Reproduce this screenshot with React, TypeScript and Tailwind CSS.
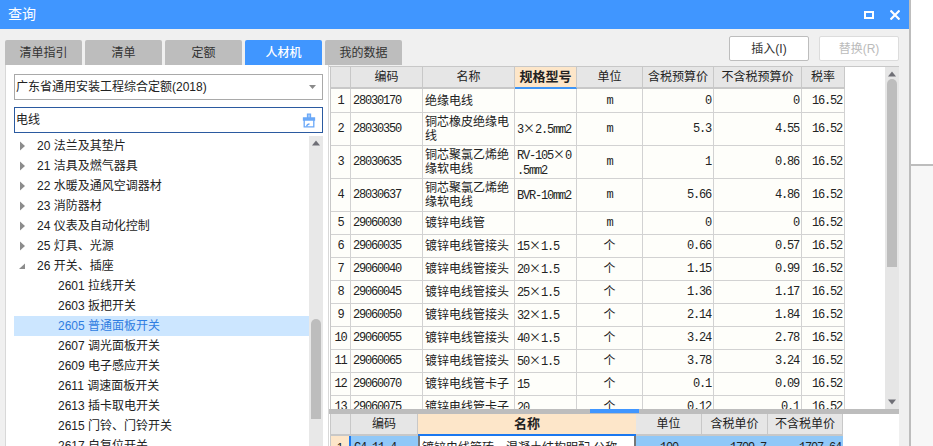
const cjk = '"Noto Sans CJK SC", sans-serif';

const tabs = ['清单指引', '清单', '定额', '人材机', '我的数据'];

const tree = [
  '20 法兰及其垫片',
  '21 洁具及燃气器具',
  '22 水暖及通风空调器材',
  '23 消防器材',
  '24 仪表及自动化控制',
  '25 灯具、光源',
];

const switches = [
  '2601 拉线开关',
  '2603 扳把开关',
  '2605 普通面板开关',
  '2607 调光面板开关',
  '2609 电子感应开关',
  '2611 调速面板开关',
  '2613 插卡取电开关',
  '2615 门铃、门铃开关',
  '2617 自复位开关',
];

const rows = [
  { code: '28030170', name: '绝缘电线', spec: '', unit: 'm', tax: '0', net: '0', h: 'h-[24px]' },
  { code: '28030350', name: '铜芯橡皮绝缘电线', spec: '3×2.5mm2', unit: 'm', tax: '5.3', net: '4.55', h: 'h-[33px]' },
  { code: '28030635', name: '铜芯聚氯乙烯绝缘软电线', spec: 'RV-105×0\n.5mm2', unit: 'm', tax: '1', net: '0.86', h: 'h-[33px]' },
  { code: '28030637', name: '铜芯聚氯乙烯绝缘软电线', spec: 'BVR-10mm2', unit: 'm', tax: '5.66', net: '4.86', h: 'h-[33px]' },
  { code: '29060030', name: '镀锌电线管', spec: '', unit: 'm', tax: '0', net: '0', h: 'h-[23px]' },
  { code: '29060035', name: '镀锌电线管接头', spec: '15×1.5', unit: '个', tax: '0.66', net: '0.57', h: 'h-[23px]' },
  { code: '29060040', name: '镀锌电线管接头', spec: '20×1.5', unit: '个', tax: '1.15', net: '0.99', h: 'h-[23px]' },
  { code: '29060045', name: '镀锌电线管接头', spec: '25×1.5', unit: '个', tax: '1.36', net: '1.17', h: 'h-[23px]' },
  { code: '29060050', name: '镀锌电线管接头', spec: '32×1.5', unit: '个', tax: '2.14', net: '1.84', h: 'h-[23px]' },
  { code: '29060055', name: '镀锌电线管接头', spec: '40×1.5', unit: '个', tax: '3.24', net: '2.78', h: 'h-[23px]' },
  { code: '29060065', name: '镀锌电线管接头', spec: '50×1.5', unit: '个', tax: '3.78', net: '3.24', h: 'h-[23px]' },
  { code: '29060070', name: '镀锌电线管卡子', spec: '15', unit: '个', tax: '0.1', net: '0.09', h: 'h-[23px]' },
  { code: '29060075', name: '镀锌电线管卡子', spec: '20', unit: '个', tax: '0.12', net: '0.1', h: 'h-[23px]' },
];

const topCols = 'grid grid-cols-[20px_72px_92px_62px_66px_71px_88px_43px] w-[514px]';
const bottomCols = 'grid grid-cols-[20px_67px_218px_66px_66px_75px] w-[512px]';

// 数字用等宽字体，压到宋体那样 6px 一个字符
function Mono({ text }: { text: string }) {
  return (
    <span className="font-['Liberation_Mono'] tracking-[-1.2px]">
      {text.split(/(×)/).map((part, i) =>
        part === '×' ? (
          <span key={i} className="font-['Noto_Sans_CJK_SC'] tracking-normal">×</span>
        ) : (
          part
        ),
      )}
    </span>
  );
}

function Head({ text, hot }: { text: string; hot?: boolean }) {
  return (
    <div
      className={
        'flex items-center justify-center border-r border-b-2 border-[#c8c8c8] ' +
        (hot ? 'bg-[#fde6c9] text-[13px] font-bold border-b-[#3f95f5]' : 'bg-[#e6e6e6]')
      }
    >
      {text}
    </div>
  );
}

function Cell({ children, className }: { children?: React.ReactNode; className?: string }) {
  return (
    <div className={'flex items-center border-r border-b border-[#d2d2d2] bg-[#fefefa] ' + (className ?? '')}>
      {children}
    </div>
  );
}

function Arrow({ down }: { down?: boolean }) {
  return (
    <svg width="10" height="6" viewBox="0 0 10 6" className={down ? 'rotate-180' : ''}>
      <path d="M5 0.5 9 5.5H1Z" fill="#6f6f76" />
    </svg>
  );
}

function BrushIcon() {
  return (
    <svg width="14" height="15" viewBox="0 0 14 15" fill="none" stroke="#6aa8f8" strokeWidth="1.3">
      <path d="M5.5 5V1.2h3V5" fill="#a9cdfb" />
      <path d="M1.5 5h11v2h-11z" fill="#6aa8f8" />
      <path d="M2.2 7v6.8h9.6V7" />
      <path d="M4.5 13.5c.4-1.5 1.6-2.5 3-2.5" />
    </svg>
  );
}

function TreeArrow({ open }: { open?: boolean }) {
  if (open) {
    return (
      <svg width="8" height="8" viewBox="0 0 8 8">
        <path d="M7 1.5V7H1Z" fill="#8c8c8c" />
      </svg>
    );
  }
  return (
    <svg width="8" height="10" viewBox="0 0 8 10">
      <path d="M2 .5 7 5 2 9.5Z" fill="#8c8c8c" />
    </svg>
  );
}

export default function App() {
  return (
    <div
      className="flex h-[446px] w-[933px] overflow-hidden bg-white text-[12px] text-[#222]"
      style={{ fontFamily: '"Liberation Sans", ' + cjk }}
    >
      <div className="flex h-full w-[911px] shrink-0 flex-col border-r-2 border-[#bdbdbd] bg-[#f0f0f0]">
        {/* 标题栏 */}
        <div className="flex h-[29px] shrink-0 items-center justify-between bg-[#4096ff] pl-[8px] pr-[9px] text-[14px] text-white">
          <span>查询</span>
          <div className="flex items-center gap-[16px]">
            <div className="h-[8px] w-[10px] border-2 border-white" />
            <svg width="10" height="10" viewBox="0 0 10 10" stroke="white" strokeWidth="2.2">
              <path d="M.5.5l9 9M9.5.5l-9 9" />
            </svg>
          </div>
        </div>

        {/* 页签和按钮 */}
        <div className="flex h-[36px] shrink-0 justify-between pl-[5px] pr-[10px]">
          <div className="flex items-stretch gap-[3px] pt-[11px]">
            {tabs.map((t) => (
              <div
                key={t}
                className={
                  'flex w-[77px] items-center justify-center rounded-t-[2px] ' +
                  (t === '人材机' ? 'bg-[#4096ff] font-medium text-white' : 'bg-[#bdbdbd] text-[#333]')
                }
              >
                {t}
              </div>
            ))}
          </div>
          <div className="flex items-start gap-[10px] pt-[7px]">
            <div className="flex h-[25px] w-[80px] items-center justify-center rounded-[2px] border border-[#bdbdbd] bg-white text-[#333]">
              插入(I)
            </div>
            <div className="flex h-[25px] w-[80px] items-center justify-center rounded-[2px] border border-[#dcdcdc] bg-white text-[#bbb]">
              替换(R)
            </div>
          </div>
        </div>

        <div className="flex min-h-0 flex-1 pl-[5px] pr-[10px]">
          {/* 左侧 */}
          <div className="flex min-h-0 w-[324px] shrink-0 flex-col overflow-hidden border-x border-[#d8d8d8] bg-white pl-[8px] pr-[5px] pt-[9px]">
            <div className="flex h-[26px] shrink-0 items-center justify-between border border-[#a9a9a9] pl-[1px] pr-[6px]">
              <span>广东省通用安装工程综合定额(2018)</span>
              <svg width="7" height="4" viewBox="0 0 7 4">
                <path d="M0 0h7L3.5 4Z" fill="#8a8a8a" />
              </svg>
            </div>
            <div className="mt-[7px] flex h-[26px] shrink-0 items-center justify-between border border-[#2b5aa0] pl-[1px] pr-[6px]">
              <span>电线</span>
              <BrushIcon />
            </div>
            <div className="mt-[3px] flex min-h-0 flex-1">
              <div className="min-w-0 flex-1">
                {tree.map((t) => (
                  <div key={t} className="flex h-[20px] items-center">
                    <span className="flex w-[16px] justify-center"><TreeArrow /></span>
                    <span className="pl-[7px]">{t}</span>
                  </div>
                ))}
                <div className="flex h-[20px] items-center">
                  <span className="flex w-[16px] justify-center"><TreeArrow open /></span>
                  <span className="pl-[7px]">26 开关、插座</span>
                </div>
                {switches.map((t) => (
                  <div
                    key={t}
                    className={
                      'flex h-[20px] items-center pl-[44px] ' +
                      (t.startsWith('2605') ? 'bg-[#cce6ff] text-[#2f7de1]' : '')
                    }
                  >
                    {t}
                  </div>
                ))}
              </div>
              <div className="flex w-[14px] shrink-0 flex-col items-center bg-[#e8e8e8] pt-[4px]">
                <Arrow />
                <div className="mt-[173px] h-[100px] w-[10px] shrink-0 rounded-t-[5px] bg-[#bdbdbd]" />
              </div>
            </div>
          </div>

          {/* 右侧 */}
          <div className="flex min-h-0 min-w-0 flex-1 flex-col pt-[1px]">
            <div className="flex min-h-0 flex-1 flex-col border-t border-[#c8c8c8] bg-white">
              <div className="flex h-[342px] shrink-0 overflow-hidden pl-[1px]">
                <div className="min-w-0 flex-1 border-l border-[#c8c8c8]">
                  <div className={topCols + ' h-[22px]'}>
                    <Head text="" />
                    <Head text="编码" />
                    <Head text="名称" />
                    <Head text="规格型号" hot />
                    <Head text="单位" />
                    <Head text="含税预算价" />
                    <Head text="不含税预算价" />
                    <Head text="税率" />
                  </div>
                  {rows.map((r, i) => (
                    <div key={r.code} className={topCols + ' ' + r.h}>
                      <Cell className="justify-center">
                        <Mono text={String(i + 1)} />
                      </Cell>
                      <Cell className="pl-[2px]">
                        <Mono text={r.code} />
                      </Cell>
                      <Cell className="px-[2px] leading-[14px]">
                        <span>{r.name}</span>
                      </Cell>
                      <Cell className="px-[2px] leading-[14px]">
                        <span className="whitespace-pre-line">
                          <Mono text={r.spec} />
                        </span>
                      </Cell>
                      <Cell className="justify-center">
                        {r.unit === 'm' ? <Mono text="m" /> : r.unit}
                      </Cell>
                      <Cell className="justify-end pr-[2px]">
                        <Mono text={r.tax} />
                      </Cell>
                      <Cell className="justify-end pr-[2px]">
                        <Mono text={r.net} />
                      </Cell>
                      <Cell className="justify-end pr-[2px]">
                        <Mono text="16.52" />
                      </Cell>
                    </div>
                  ))}
                </div>
                <div className="flex w-[14px] shrink-0 flex-col items-center justify-between bg-[#e6e6e6] pb-[4px] pt-[4px]">
                  <div className="flex flex-col items-center">
                    <Arrow />
                    <div className="mt-[2px] h-[188px] w-[10px] rounded-t-[5px] bg-[#bdbdbd]" />
                  </div>
                  <Arrow down />
                </div>
              </div>

              {/* 分隔条 */}
              <div className="flex h-[5px] shrink-0 justify-center bg-[#bdbdbd]">
                <div className="h-[4px] w-[49px] bg-[#4096ff]" />
              </div>

              <div className="min-h-0 flex-1 overflow-hidden pl-[1px]">
                <div className="border-l border-[#c8c8c8]">
                  <div className={bottomCols + ' h-[22px]'}>
                    <Head text="" />
                    <Head text="编码" />
                    <div className="flex items-center justify-center border-b-2 border-[#1a78f0] bg-[#fde6c9] text-[13px] font-bold">
                      名称
                    </div>
                    <Head text="单位" />
                    <Head text="含税单价" />
                    <Head text="不含税单价" />
                  </div>
                  <div className={bottomCols + ' h-[23px]'}>
                    <div className="flex items-center justify-center border-r-2 border-[#1a78f0] bg-[#fde6c9]">1</div>
                    <div className="flex items-center bg-[#90c8f8] pl-[3px]">
                      <Mono text="C4-11-4" />
                    </div>
                    <div className="flex items-center overflow-hidden whitespace-nowrap border-x-2 border-[#777] bg-white pl-[2px]">
                      镀锌电线管砖、混凝土结构明配 公称…
                    </div>
                    <div className="flex items-center justify-center bg-[#90c8f8]">
                      <Mono text="100" />
                    </div>
                    <div className="flex items-center justify-end bg-[#90c8f8] pr-[2px]">
                      <Mono text="1709.7" />
                    </div>
                    <div className="flex items-center justify-end bg-[#90c8f8] pr-[2px]">
                      <Mono text="1707.64" />
                    </div>
                  </div>
                </div>
              </div>
            </div>
          </div>
        </div>
      </div>

      {/* 窗口后面露出的页面 */}
      <div className="flex min-w-0 flex-1 flex-col">
        <div className="h-[166px] shrink-0 border-b-2 border-[#bdbdbd] bg-white" />
        <div className="flex-1 bg-[#f7f7f7]" />
      </div>
    </div>
  );
}
